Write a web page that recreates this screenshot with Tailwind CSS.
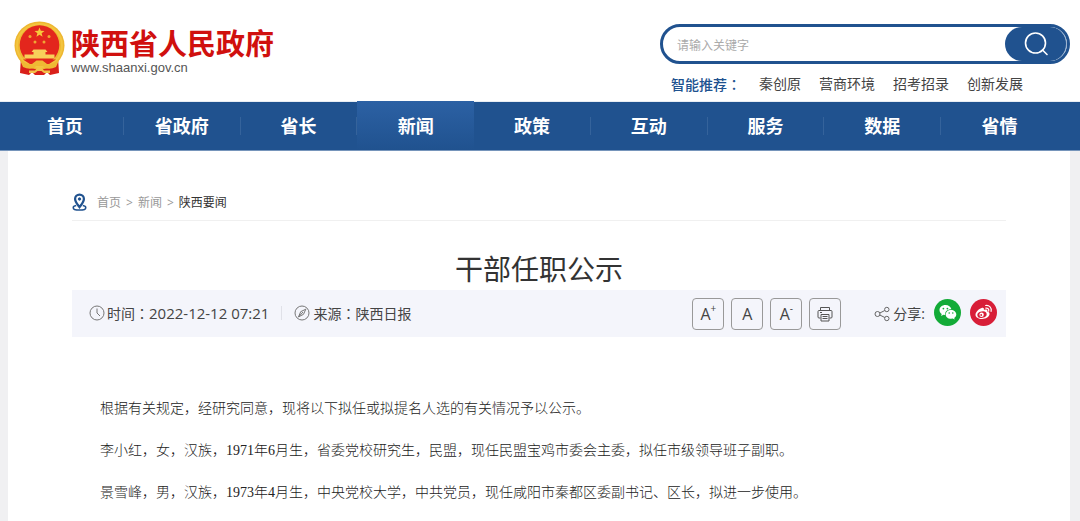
<!DOCTYPE html>
<html lang="zh-CN">
<head>
<meta charset="UTF-8">
<meta name="viewport" content="width=device-width, initial-scale=1">
<title>干部任职公示 - 陕西省人民政府</title>
<script src="https://cdn.jsdelivr.net/npm/@tailwindcss/browser@4"></script>
</head>
<body class="min-h-screen bg-[#f0f0f2] font-['Open_Sans','Noto_Sans_CJK_SC',sans-serif] text-sm text-[#444]">
<header class="bg-white">
  <div class="flex h-[101px] items-start justify-between pr-2.5 pl-3.5">
    <a href="#" class="flex items-start gap-1.5 pt-5" aria-label="陕西省人民政府">
      <svg class="h-14 w-[51px]" viewBox="0 0 51 56" aria-hidden="true">
        <path d="M7 37 6 53l9 2 3-3 3 3h9l3-3 3 3 9-2-1-16z" fill="#d9201a"/>
        <ellipse cx="25.500" cy="25.500" rx="25" ry="24" fill="#eeb730"/>
        <ellipse cx="25.500" cy="25.500" rx="22.500" ry="21.500" fill="none" stroke="#f3c540" stroke-width="2"/>
        <circle cx="25.500" cy="25" r="19.800" fill="#e3261d"/>
        <path d="m25.500 7.500 1.300 3.300 3.700.2-2.900 2.300 1 3.500-3.100-2-3.100 2 1-3.500-2.900-2.300 3.700-.2z" fill="#f7c83c"/>
        <g fill="#f0a634"><circle cx="16" cy="16.500" r="1.500"/><circle cx="35" cy="16.500" r="1.500"/><circle cx="21" cy="22" r="1.500"/><circle cx="30" cy="22" r="1.500"/></g>
        <path d="M19.500 29.500h12l2 2.500h-2v2.500h9v4h-30v-4h9V32h-2z" fill="#f8d05a"/>
        <path d="M9 39.500h33l-7 4.500H16z" fill="#e3261d"/>
        <path d="M5 38q7 7 13 6l4.500-3.500h6L33 44q6 1 13-6l-4 9q-6 3-11 1l-3-3h-5l-3 3q-5 2-11-1z" fill="#efb934"/>
        <path d="M15 50.500h6l2-2.500h5l2 2.500h6v2.500h-6l-2.500-2h-4l-2.500 2h-6z" fill="#f3c24a"/>
      </svg>
      <span class="flex flex-col pt-2">
        <strong class="text-[29px] leading-8 font-bold text-[#d0100e]">陕西省人民政府</strong>
        <span class="font-['Liberation_Sans',sans-serif] text-[13px] leading-4 text-[#555]">www.shaanxi.gov.cn</span>
      </span>
    </a>
    <div class="w-[410px] pt-6">
      <form class="flex h-10 items-stretch rounded-full border-3 border-[#20528f] bg-white" role="search">
        <input type="text" aria-label="搜索关键字" placeholder="请输入关键字" class="min-w-0 flex-1 rounded-l-full pt-[3px] pl-3.5 text-xs outline-none placeholder:text-[#aaa]">
        <button type="button" aria-label="搜索" class="flex w-[62px] items-center justify-center rounded-full border-r border-[#9db4d0] bg-[#20528f]">
          <svg class="size-6" viewBox="0 0 24 24" fill="none" stroke="#fff" stroke-width="1.600" stroke-linecap="round" aria-hidden="true"><circle cx="11.500" cy="11" r="10"/><path d="m18.500 18 4.500 4.500"/></svg>
        </button>
      </form>
      <div class="flex gap-[18px] pt-2.5 pl-[11px] leading-5">
        <strong class="font-medium text-[#20528f]">智能推荐<span class="font-['Noto_Sans_CJK_TC']" lang="zh-TW">：</span></strong>
        <a href="#">秦创原</a>
        <a href="#">营商环境</a>
        <a href="#">招考招录</a>
        <a href="#">创新发展</a>
      </div>
    </div>
  </div>
  <nav class="border-t border-b border-t-[#e8edf3] border-b-[#7695bb] bg-[#20528f] pr-[22px] pl-[7px]" aria-label="主导航">
    <ul class="grid h-12 grid-cols-9 text-center text-lg leading-12 font-bold text-white">
      <li class="flex items-center"><a href="#" class="flex-1">首页</a><span class="h-[18px] w-px bg-[#35639b]"></span></li>
      <li class="flex items-center"><a href="#" class="flex-1">省政府</a><span class="h-[18px] w-px bg-[#35639b]"></span></li>
      <li class="flex items-center"><a href="#" class="flex-1">省长</a><span class="h-[18px] w-px bg-[#35639b]"></span></li>
      <li class="-mt-px flex items-center bg-linear-to-b from-[#2c61a4] to-[#20528f]"><a href="#" class="flex-1" aria-current="page">新闻</a></li>
      <li class="flex items-center"><a href="#" class="flex-1">政策</a><span class="h-[18px] w-px bg-[#35639b]"></span></li>
      <li class="flex items-center"><a href="#" class="flex-1">互动</a><span class="h-[18px] w-px bg-[#35639b]"></span></li>
      <li class="flex items-center"><a href="#" class="flex-1">服务</a><span class="h-[18px] w-px bg-[#35639b]"></span></li>
      <li class="flex items-center"><a href="#" class="flex-1">数据</a><span class="h-[18px] w-px bg-[#35639b]"></span></li>
      <li class="flex items-center"><a href="#" class="flex-1">省情</a></li>
    </ul>
  </nav>
</header>
<main class="mr-2.5 ml-2 min-h-[370px] bg-white px-16 pt-[34px]">
  <nav class="flex h-9 items-center gap-2.5 border-b border-[#f0f0f0] text-xs text-[#999]" aria-label="当前位置">
    <svg class="h-[19px] w-[15px]" viewBox="0 0 16 19" fill="none" stroke="#20528f" aria-hidden="true">
      <path d="M8 14.500C5.500 11 3.300 8.500 3.300 5.700a4.700 4.700 0 0 1 9.400 0C12.700 8.500 10.500 11 8 14.500z" stroke-width="2.400"/><circle cx="8" cy="5.800" r="1.300" fill="#20528f"/>
      <path d="M4.500 12.800C2.500 13.200 1.300 14 1.300 15c0 1.500 3 2.600 6.700 2.600s6.700-1.100 6.700-2.600c0-1-1.200-1.800-3.200-2.200" stroke-width="1.600"/>
    </svg>
    <span class="flex gap-[5px]"><a href="#">首页</a><span>&gt;</span><a href="#">新闻</a><span>&gt;</span><span class="text-[#333]">陕西要闻</span></span>
  </nav>
  <article>
    <h1 class="pt-[29px] pb-0.5 text-center text-[28px] leading-[38px] text-[#333]">干部任职公示</h1>
    <div class="flex h-[47px] items-center justify-between bg-[#f4f5fb] pr-[9px] pl-[17px]">
      <div class="flex items-center">
        <svg class="mr-0.5 size-4" viewBox="0 0 16 16" fill="none" stroke="#777" aria-hidden="true"><circle cx="8" cy="8" r="7"/><path d="M8 3.500V8l3 3"/></svg>
        <span>时间<span class="font-['Noto_Sans_CJK_TC']" lang="zh-TW">：</span></span><time class="text-[15px]" datetime="2022-12-12T07:21">2022-12-12 07:21</time>
        <span class="mx-3 h-3.5 w-px bg-[#e0e1e8]"></span>
        <svg class="mr-[3px] size-4" viewBox="0 0 16 16" fill="none" stroke="#777" aria-hidden="true"><circle cx="8" cy="8" r="7"/><path d="M11.800 4.200 9.500 9.300l-5 2.600 2.200-5.200zM4.500 11.900 9 7"/></svg>
        <span>来源<span class="font-['Noto_Sans_CJK_TC']" lang="zh-TW">：</span>陕西日报</span>
      </div>
      <div class="flex items-center">
        <div class="flex gap-[7px] text-base text-[#444]">
          <button type="button" aria-label="放大字体" class="flex size-8 items-center justify-center rounded border border-[#999]">A<sup class="-top-1.5 text-[10px]">+</sup></button>
          <button type="button" aria-label="默认字体" class="flex size-8 items-center justify-center rounded border border-[#999]">A</button>
          <button type="button" aria-label="缩小字体" class="flex size-8 items-center justify-center rounded border border-[#999]">A<sup class="-top-1.5 text-[10px]">-</sup></button>
          <button type="button" aria-label="打印" class="flex size-8 items-center justify-center rounded border border-[#999]">
            <svg class="size-4" viewBox="0 0 16 16" fill="none" stroke="#555" aria-hidden="true"><path d="M3.500 4.500v-3h9v3M3.500 12H2a1 1 0 0 1-1-1V5.500a1 1 0 0 1 1-1h12a1 1 0 0 1 1 1V11a1 1 0 0 1-1 1h-1.500M4 8.500h8v6.500H4zM5.500 10.500h5M5.500 12.500h5M3 6.500h2"/></svg>
          </button>
        </div>
        <svg class="mr-[3px] ml-[33px] size-4" viewBox="0 0 16 16" fill="none" stroke="#666" aria-hidden="true"><circle cx="3.500" cy="8" r="2.500"/><circle cx="12.800" cy="3.500" r="2.200"/><circle cx="12.800" cy="12.500" r="2.200"/><path d="m5.800 7 5-2.500M5.800 9l5 2.500"/></svg>
        <span>分享:</span>
        <a href="#" aria-label="分享到微信" class="mb-0.5 ml-[9px] size-[27px]">
          <svg viewBox="0 0 27 27" aria-hidden="true"><circle cx="13.500" cy="13.500" r="13.500" fill="#13ab37"/><path d="M11.500 6C8 6 5.500 8.200 5.500 11c0 1.700.8 3 2.200 3.900l-.6 2 2.300-1.200 1.800.3c-.4-3.600 2.400-5.800 6.200-5.700C16.800 7.700 14.500 6 11.500 6z" fill="#fff"/><path d="M17 11c-3 0-5.300 2-5.300 4.400s2.300 4.400 5.300 4.400l1.700-.3 2 1.100-.5-1.700c1.300-.8 2.100-2 2.100-3.500 0-2.400-2.400-4.400-5.300-4.400z" fill="#fff"/><g fill="#13ab37"><circle cx="9.400" cy="9.600" r=".9"/><circle cx="13.400" cy="9.600" r=".9"/><circle cx="15.200" cy="14" r=".8"/><circle cx="18.800" cy="14" r=".8"/></g></svg>
        </a>
        <a href="#" aria-label="分享到微博" class="mb-0.5 ml-[9px] size-[27px]">
          <svg viewBox="0 0 27 27" aria-hidden="true"><circle cx="13.500" cy="13.500" r="13.500" fill="#d81e38"/><path d="M11.600 9c1.500-.6 2.700 0 2.300 1.900 2-.8 4-.6 3.400 1.500 1.500.4 2.500 1.300 2.200 2.900-.4 2.600-3.500 4.700-7.400 4.700-3.700 0-6.600-1.700-6.600-4.300 0-2.700 3.300-5.800 6.100-6.700z" fill="#fff"/><ellipse cx="12" cy="15.600" rx="4.700" ry="3.200" transform="rotate(-10 12 15.600)" fill="#d81e38"/><circle cx="11.600" cy="15.700" r="2.200" fill="#fff"/><circle cx="11.200" cy="16" r=".9" fill="#d81e38"/><path d="M15.800 9.200c2-.4 3.400 1 2.900 2.900M15.600 6.500c3.600-.7 6.400 2.300 5.500 5.800" fill="none" stroke="#fff" stroke-width="1.200" stroke-linecap="round"/></svg>
        </a>
      </div>
    </div>
    <div class="flex flex-col gap-[18px] px-7 pt-[60px] pb-4 font-['Liberation_Serif','Noto_Sans_CJK_SC',serif] leading-6 font-light text-[#222]">
      <p>根据有关规定，经研究同意，现将以下拟任或拟提名人选的有关情况予以公示。</p>
      <p>李小红，女，汉族，1971年6月生，省委党校研究生，民盟，现任民盟宝鸡市委会主委，拟任市级领导班子副职。</p>
      <p>景雪峰，男，汉族，1973年4月生，中央党校大学，中共党员，现任咸阳市秦都区委副书记、区长，拟进一步使用。</p>
    </div>
  </article>
</main>
</body>
</html>
